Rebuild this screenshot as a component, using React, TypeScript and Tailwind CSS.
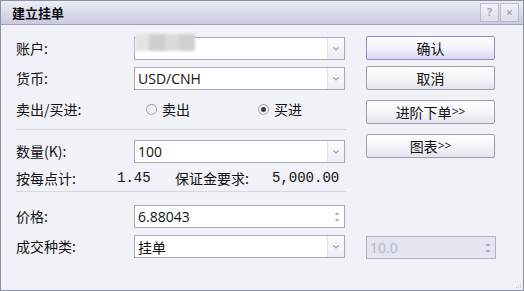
import React from "react";

const cjk = { fontFamily: '"Noto Sans CJK SC", "Noto Sans", sans-serif' };
const latin = { fontFamily: '"Open Sans", "Noto Sans", "Noto Sans CJK SC", sans-serif' };
const mono = { fontFamily: '"Liberation Mono", "Noto Sans CJK SC", monospace' };

function Chevron() {
  return (
    <svg width="8" height="6" viewBox="0 0 8 6">
      <path d="M1.5 1.5 L4 4 L6.5 1.5" fill="none" stroke="#a0a2ae" strokeWidth="1.2" />
    </svg>
  );
}

function Combo({ children, className = "" }: { children?: React.ReactNode; className?: string }) {
  return (
    <div className={`relative flex h-full w-[211px] items-center border border-[#a9abbb] bg-white ${className}`}>
      <div className="flex-1 pl-[3px] text-[14px] leading-none text-[#111]">{children}</div>
      <div className="flex h-full w-[17px] items-center justify-center border-l border-[#e2e3ea] bg-gradient-to-b from-[#fbfbfd] to-[#eceef4]">
        <Chevron />
      </div>
    </div>
  );
}

function Spin({ disabled = false }: { disabled?: boolean }) {
  const c = disabled ? "#a9acb8" : "#b4b6c0";
  return (
    <svg width="8" height="14" viewBox="0 0 8 14">
      <path d="M1.5 5 L4 2 L6.5 5 Z" fill={c} />
      <path d="M1.5 9 L4 12 L6.5 9 Z" fill={c} />
    </svg>
  );
}

function Button({ children, def = false }: { children: React.ReactNode; def?: boolean }) {
  return (
    <div
      className={`flex h-[24px] w-[129px] items-center justify-center rounded-[2px] border ${
        def ? "border-[#8d8fc4] bg-gradient-to-b from-[#ffffff] via-[#f3f3fa] to-[#d9daf2]" : "border-[#9c9eae] bg-gradient-to-b from-[#ffffff] via-[#f5f5f9] to-[#e4e5ec]"
      } text-[14px] text-[#111]`}
      style={cjk}
    >
      {children}
    </div>
  );
}

function Radio({ checked }: { checked: boolean }) {
  return (
    <div className="flex h-[11px] w-[11px] items-center justify-center rounded-full border border-[#9ea0aa] bg-gradient-to-br from-[#e8e8ec] to-[#fafafa]">
      {checked && <div className="h-[5px] w-[5px] rounded-full bg-[#3a3a44]" />}
    </div>
  );
}

export default function App() {
  return (
    <div className="flex h-[291px] w-[524px] flex-col border border-[#8c90a4] bg-[#f1f1f8]" style={cjk}>
      {/* title bar */}
      <div className="flex h-[24px] shrink-0 items-center justify-between border-b border-[#9da1b4] bg-gradient-to-b from-[#eceef6] via-[#dadced] to-[#c9ccdd] pl-[11px] pr-[4px]">
        <span className="text-[13px] font-bold text-[#111]">建立挂单</span>
        <div className="flex gap-[1px]">
          <div className="flex h-[19px] w-[19px] items-center justify-center border border-[#b9bccb] bg-gradient-to-b from-[#f2f3f8] to-[#dcdee8] text-[11px] font-bold text-[#a8abb8]" style={latin}>
            ?
          </div>
          <div className="flex h-[19px] w-[19px] items-center justify-center border border-[#b9bccb] bg-gradient-to-b from-[#f2f3f8] to-[#dcdee8] text-[12px] font-bold text-[#a8abb8]" style={latin}>
            ×
          </div>
        </div>
      </div>

      {/* body */}
      <div className="relative flex flex-1 pl-[15px]">
        {/* left column */}
        <div className="flex w-[330px] flex-col pt-[12px]">
          <div className="flex h-[23px] items-center">
            <span className="w-[118px] text-[14px] text-[#111]">账户:</span>
            <div className="relative h-full">
              <Combo />
              <div className="absolute left-[1px] top-[-3px] flex h-[17px] blur-[1.5px]">
                <div className="w-[14px] bg-[#e4e4e6]" />
                <div className="w-[16px] bg-[#cfcfd2]" />
                <div className="w-[14px] bg-[#dadadd]" />
                <div className="w-[16px] bg-[#d0d0d3]" />
              </div>
            </div>
          </div>
          <div className="mt-[7px] flex h-[23px] items-center">
            <span className="w-[118px] text-[14px] text-[#111]">货币:</span>
            <Combo>
              <span style={latin}>USD/CNH</span>
            </Combo>
          </div>
          <div className="mt-[8px] flex h-[22px] items-center">
            <span className="w-[130px] text-[14px] text-[#111]">卖出/买进:</span>
            <div className="flex items-center gap-[5px]">
              <Radio checked={false} />
              <span className="text-[14px] text-[#111]">卖出</span>
            </div>
            <div className="ml-[68px] flex items-center gap-[5px]">
              <Radio checked={true} />
              <span className="text-[14px] text-[#111]">买进</span>
            </div>
          </div>
          <div className="mt-[9px] h-px bg-[#d6d7e0]" />
          <div className="mt-[10px] flex h-[23px] items-center">
            <span className="w-[118px] text-[14px] text-[#111]">数量(K):</span>
            <Combo>
              <span style={latin}>100</span>
            </Combo>
          </div>
          <div className="mt-[7px] flex h-[16px] items-center text-[14px] text-[#111]">
            <span className="w-[101px]">按每点计:</span>
            <span className="w-[58px]" style={mono}>1.45</span>
            <span className="w-[97px]">保证金要求:</span>
            <span style={mono}>5,000.00</span>
          </div>
          <div className="mt-[5px] h-px bg-[#d6d7e0]" />
          <div className="mt-[13px] flex h-[23px] items-center">
            <span className="w-[118px] text-[14px] text-[#111]">价格:</span>
            <div className="flex h-full w-[211px] items-center border border-[#a9abbb] bg-white">
              <span className="flex-1 pl-[3px] text-[14px] text-[#111]" style={latin}>6.88043</span>
              <div className="flex w-[14px] justify-center">
                <Spin />
              </div>
            </div>
          </div>
          <div className="mt-[7px] flex h-[23px] items-center">
            <span className="w-[118px] text-[14px] text-[#111]">成交种类:</span>
            <Combo>挂单</Combo>
          </div>
        </div>

        {/* right column */}
        <div className="ml-[20px] flex flex-col pt-[11px]">
          <Button def>确认</Button>
          <div className="mt-[6px]">
            <Button>取消</Button>
          </div>
          <div className="mt-[10px]">
            <Button>
              进阶下单<span style={latin} className="text-[12px]">&gt;&gt;</span>
            </Button>
          </div>
          <div className="mt-[10px]">
            <Button>
              图表<span style={latin} className="text-[12px]">&gt;&gt;</span>
            </Button>
          </div>
          <div className="mt-[78px] flex h-[23px] w-[130px] items-center border border-[#b0b2c0] bg-[#e3e5f0]">
            <span className="flex-1 pl-[3px] text-[14px] text-[#b4b6c4]" style={latin}>10.0</span>
            <div className="flex w-[14px] justify-center">
              <Spin disabled />
            </div>
          </div>
        </div>

        {/* size grip */}
        <div className="absolute bottom-[1px] right-[1px] h-[8px] w-[8px]">
          <svg width="8" height="8" viewBox="0 0 8 8">
            <rect x="6" y="2" width="1" height="1" fill="#c4c6d0" />
            <rect x="4" y="4" width="1" height="1" fill="#c4c6d0" />
            <rect x="6" y="4" width="1" height="1" fill="#c4c6d0" />
            <rect x="2" y="6" width="1" height="1" fill="#c4c6d0" />
            <rect x="4" y="6" width="1" height="1" fill="#c4c6d0" />
            <rect x="6" y="6" width="1" height="1" fill="#c4c6d0" />
          </svg>
        </div>
      </div>
    </div>
  );
}
